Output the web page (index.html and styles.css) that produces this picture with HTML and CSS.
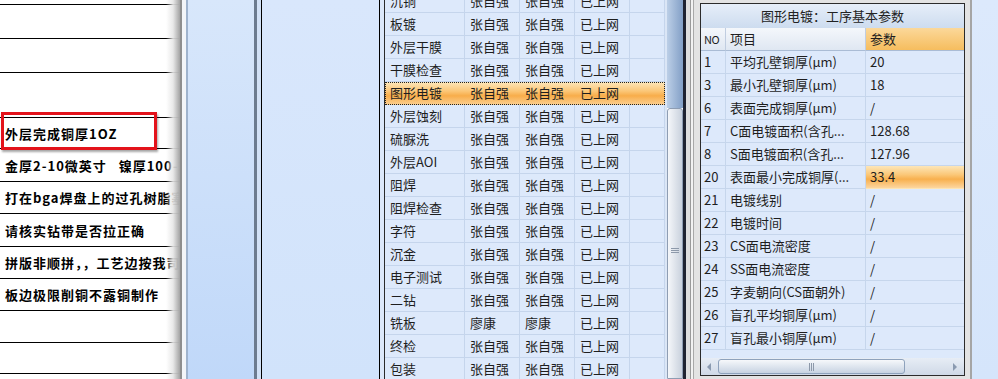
FILE: index.html
```html
<!DOCTYPE html>
<html lang="zh-CN">
<head>
<meta charset="utf-8">
<title>工序参数</title>
<link rel="stylesheet" href="styles.css">
</head>
<body>
<div class="app">
  <div class="sheet">
    <div class="srows">
      <div class="srow h34"></div>
      <div class="srow h34"></div>
      <div class="srow h34"></div>
      <div class="srow h45"></div>
      <div class="srow h31">外层完成铜厚1OZ</div>
      <div class="srow h33">金厚2-10微英寸&nbsp;&nbsp;&nbsp;镍厚100-200微英寸</div>
      <div class="srow">打在bga焊盘上的过孔树脂塞孔</div>
      <div class="srow h33">请核实钻带是否拉正确</div>
      <div class="srow">拼版非顺拼，，工艺边按我司标准</div>
      <div class="srow">板边极限削铜不露铜制作</div>
      <div class="srow"></div>
      <div class="srow h31"></div>
      <div class="srow h34"></div>
    </div>
    <div class="shadow"></div>
    <div class="mark"></div>
  </div>
  <div class="splitter"></div>
  <div class="pane-a"></div>
  <div class="pane-edge"></div>
  <div class="pane-b"></div>
  <div class="gap"></div>
  <div class="list">
    <div class="mrows">
      <div class="mrow"><span>沉铜</span><span>张自强</span><span>张自强</span><span>已上网</span><span></span></div>
      <div class="mrow"><span>板镀</span><span>张自强</span><span>张自强</span><span>已上网</span><span></span></div>
      <div class="mrow"><span>外层干膜</span><span>张自强</span><span>张自强</span><span>已上网</span><span></span></div>
      <div class="mrow"><span>干膜检查</span><span>张自强</span><span>张自强</span><span>已上网</span><span></span></div>
      <div class="mrow sel"><span>图形电镀</span><span>张自强</span><span>张自强</span><span>已上网</span><span></span></div>
      <div class="mrow"><span>外层蚀刻</span><span>张自强</span><span>张自强</span><span>已上网</span><span></span></div>
      <div class="mrow"><span>硫脲洗</span><span>张自强</span><span>张自强</span><span>已上网</span><span></span></div>
      <div class="mrow"><span>外层AOI</span><span>张自强</span><span>张自强</span><span>已上网</span><span></span></div>
      <div class="mrow"><span>阻焊</span><span>张自强</span><span>张自强</span><span>已上网</span><span></span></div>
      <div class="mrow"><span>阻焊检查</span><span>张自强</span><span>张自强</span><span>已上网</span><span></span></div>
      <div class="mrow"><span>字符</span><span>张自强</span><span>张自强</span><span>已上网</span><span></span></div>
      <div class="mrow"><span>沉金</span><span>张自强</span><span>张自强</span><span>已上网</span><span></span></div>
      <div class="mrow"><span>电子测试</span><span>张自强</span><span>张自强</span><span>已上网</span><span></span></div>
      <div class="mrow"><span>二钻</span><span>张自强</span><span>张自强</span><span>已上网</span><span></span></div>
      <div class="mrow"><span>铣板</span><span>廖康</span><span>廖康</span><span>已上网</span><span></span></div>
      <div class="mrow"><span>终检</span><span>张自强</span><span>张自强</span><span>已上网</span><span></span></div>
      <div class="mrow"><span>包装</span><span>张自强</span><span>张自强</span><span>已上网</span><span></span></div>
    </div>
  </div>
  <div class="vscroll">
    <div class="vbar">
      <div class="vtrack"></div>
      <div class="vthumb"><div class="grip"><i></i><i></i><i></i></div></div>
    </div>
  </div>
  <div class="rpanel">
    <div class="ptable">
      <div class="ptitle">图形电镀：工序基本参数</div>
      <div class="prow phead"><span class="no">NO</span><span>项目</span><span class="hot">参数</span></div>
      <div class="prow"><span>1</span><span>平均孔壁铜厚(μm)</span><span>20</span></div>
      <div class="prow"><span>3</span><span>最小孔壁铜厚(μm)</span><span>18</span></div>
      <div class="prow"><span>6</span><span>表面完成铜厚(μm)</span><span>/</span></div>
      <div class="prow"><span>7</span><span>C面电镀面积(含孔...</span><span>128.68</span></div>
      <div class="prow"><span>8</span><span>S面电镀面积(含孔...</span><span>127.96</span></div>
      <div class="prow"><span>20</span><span>表面最小完成铜厚(...</span><span class="cur">33.4</span></div>
      <div class="prow"><span>21</span><span>电镀线别</span><span>/</span></div>
      <div class="prow"><span>22</span><span>电镀时间</span><span>/</span></div>
      <div class="prow"><span>23</span><span>CS面电流密度</span><span>/</span></div>
      <div class="prow"><span>24</span><span>SS面电流密度</span><span>/</span></div>
      <div class="prow"><span>25</span><span>字麦朝向(CS面朝外)</span><span>/</span></div>
      <div class="prow"><span>26</span><span>盲孔平均铜厚(μm)</span><span>/</span></div>
      <div class="prow"><span>27</span><span>盲孔最小铜厚(μm)</span><span>/</span></div>
      <div class="pfill"></div>
      <div class="hscroll">
        <span class="arrow left"></span>
        <div class="hthumb"><div class="hgrip"><i></i><i></i><i></i></div></div>
        <span class="arrow right"></span>
      </div>
    </div>
  </div>
  <div class="rblue"></div>
</div>
</body>
</html>
```

FILE: styles.css
```css
html, body {
  margin: 0;
  padding: 0;
}
body {
  width: 998px;
  height: 379px;
  overflow: hidden;
  font-family: "Noto Sans CJK SC", "Liberation Sans", sans-serif;
  font-size: 13px;
  color: #1e1e1e;
}
.app {
  display: flex;
  width: 998px;
  height: 379px;
  overflow: hidden;
}

/* left spreadsheet */
.sheet {
  width: 180px;
  flex: none;
  position: relative;
  background: #fff;
  overflow: hidden;
}
.srows {
  display: flex;
  flex-direction: column;
  margin-top: -29px;
}
.srow {
  box-sizing: border-box;
  height: 32px;
  flex: none;
  border-bottom: 1px solid #000;
  padding-left: 5px;
  display: flex;
  align-items: center;
  white-space: nowrap;
  font-weight: bold;
  font-size: 13px;
  letter-spacing: 1px;
  color: #000;
}
.srow.h34 { height: 34px; }
.srow.h45 { height: 45px; }
.srow.h31 { height: 31px; }
.srow.h33 { height: 33px; }
.shadow {
  position: absolute;
  top: 0;
  right: 0;
  width: 14px;
  height: 100%;
  background: linear-gradient(to right, rgba(255,255,255,0), rgba(230,230,230,0.9) 50%, #a3a3a3);
}
.mark {
  position: absolute;
  left: 1px;
  top: 112px;
  width: 156px;
  height: 38px;
  box-sizing: border-box;
  border: 3px solid #e3131b;
  box-shadow: 1px 2px 2px rgba(0, 0, 0, 0.35);
}

/* splitters and blue panes */
.splitter {
  width: 8px;
  flex: none;
  background: linear-gradient(to right, #8e8e8e 0 2px, #f3f5f8 2px 6px, #9fb3cd 6px 8px);
}
.pane-a {
  width: 66px;
  flex: none;
  background: linear-gradient(to bottom, #d8e7fb, #c0d8f9);
}
.pane-edge {
  width: 8px;
  flex: none;
  background: linear-gradient(to right, #6c7b8f 0 3px, #d2e1f6 3px 7px, #000 7px 8px);
}
.pane-b {
  width: 117px;
  flex: none;
  background: linear-gradient(to bottom, #d9e7fc, #d1e3fb);
}
.gap {
  width: 5px;
  flex: none;
  background: linear-gradient(to right, #000 0 1px, #dce8fa 1px 5px);
}

/* middle list */
.list {
  width: 281px;
  flex: none;
  box-sizing: border-box;
  border-left: 1px solid #2a2a2a;
  background: #dde9fb;
  overflow: hidden;
}
.mrows {
  margin-top: -10px;
}
.mrow {
  display: grid;
  grid-template-columns: 80px 55px 55px 55px 35px;
  height: 23px;
}
.mrow span {
  box-sizing: border-box;
  border-right: 1px solid #c5d5ec;
  border-bottom: 1px solid #c5d5ec;
  padding-left: 5px;
  line-height: 22px;
  white-space: nowrap;
  overflow: hidden;
}
.mrow.sel {
  background: linear-gradient(to bottom, #fde7bb 0%, #fbc676 40%, #f8ad4a 60%, #fbd093 100%);
  outline: 1px dotted #222;
  outline-offset: -1px;
}
.mrow.sel span {
  border-color: transparent;
}

/* vertical scrollbar */
.vscroll {
  width: 25px;
  flex: none;
  display: flex;
  box-sizing: border-box;
  border-left: 2px solid #dbe6f6;
  border-right: 4px solid #dedede;
}
.vbar {
  width: 16px;
  display: flex;
  flex-direction: column;
  border-right: 3px solid #1f2331;
}
.vtrack {
  height: 108px;
  flex: none;
  background: linear-gradient(to right, #bccfe7, #829fc6);
}
.vthumb {
  flex: 1;
  box-sizing: border-box;
  border: 1px solid #8e9db3;
  border-radius: 3px 3px 0 0;
  background: linear-gradient(to right, #f5f7fa, #c9d1dd);
  display: flex;
  justify-content: center;
  padding-top: 139px;
}
.grip {
  display: flex;
  flex-direction: column;
  gap: 1px;
}
.grip i {
  display: block;
  width: 8px;
  height: 1px;
  background: #8d99aa;
}

/* right panel */
.rpanel {
  width: 282px;
  flex: none;
  box-sizing: border-box;
  padding: 3px 5px 3px 10px;
  border-right: 2px solid #a5a5a5;
  background: linear-gradient(to right, #9a9a9a 0 1px, #f2f2f2 1px 3px, #a8a8a8 3px 4px, #e3e3e3 4px 100%);
}
.ptable {
  box-sizing: border-box;
  height: 373px;
  border: 1px solid #2b2b2b;
  background: #dde9fb;
  display: flex;
  flex-direction: column;
}
.ptitle {
  height: 24px;
  flex: none;
  line-height: 24px;
  text-align: center;
  background: linear-gradient(to bottom, #e6eef9, #cddcef);
  color: #222;
}
.prow {
  display: grid;
  grid-template-columns: 25px 140px 98px;
  height: 23px;
  flex: none;
}
.prow span {
  box-sizing: border-box;
  border-right: 1px solid #c6d6ec;
  border-bottom: 1px solid #c6d6ec;
  padding-left: 4px;
  line-height: 22px;
  white-space: nowrap;
  overflow: hidden;
}
.prow span:first-child {
  padding-left: 3px;
}
.prow span:last-child {
  border-right: none;
}
.phead span {
  background: linear-gradient(to bottom, #f4f7fb, #dfe7f2);
  border-bottom-color: #aabcd5;
  border-right-color: #c0cde0;
}
.phead .no {
  font-size: 11px;
  letter-spacing: -0.5px;
}
.phead .hot {
  background: linear-gradient(to bottom, #fbd89a, #f6bd5e);
}
.prow span.cur {
  background: linear-gradient(to bottom, #fde6b8 0%, #fbc777 40%, #f8b04e 60%, #fcd6a0 100%);
  border-bottom-color: transparent;
}
.pfill {
  flex: 1;
}
.hscroll {
  height: 17px;
  flex: none;
  display: flex;
  align-items: center;
  background: linear-gradient(to bottom, #e7edf5, #cfd9e7);
}
.arrow {
  width: 0;
  height: 0;
  border-top: 4px solid transparent;
  border-bottom: 4px solid transparent;
}
.arrow.left {
  margin: 0 7px 0 6px;
  border-right: 4px solid #8a9ab0;
}
.arrow.right {
  margin: 0 7px 0 auto;
  border-left: 4px solid #8a9ab0;
}
.hthumb {
  width: 187px;
  height: 15px;
  box-sizing: border-box;
  border: 1px solid #8ea2bc;
  border-radius: 3px;
  background: linear-gradient(to bottom, #f6f8fb, #c7d3e2);
  display: flex;
  justify-content: center;
  align-items: center;
}
.hgrip {
  display: flex;
  gap: 1px;
}
.hgrip i {
  display: block;
  width: 1px;
  height: 8px;
  background: #8d99aa;
}
.rblue {
  width: 26px;
  flex: none;
  background: linear-gradient(to bottom, #dce9fc, #d5e5fb);
}
```
